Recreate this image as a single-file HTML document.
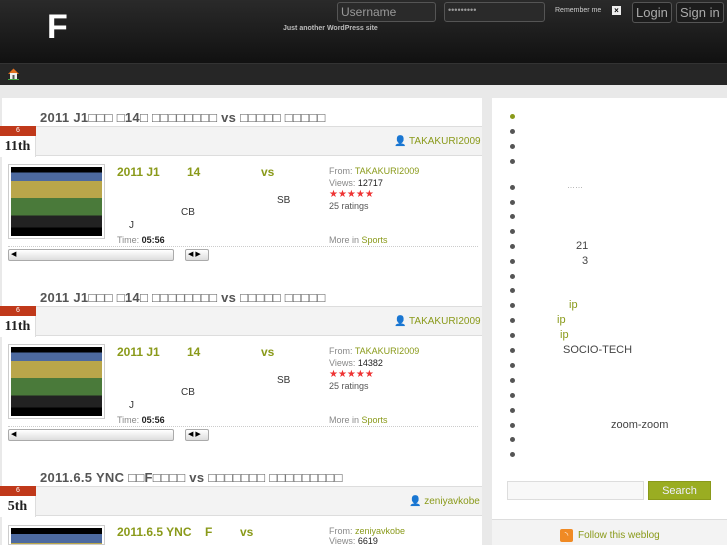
<!DOCTYPE html><html><head><meta charset="utf-8"><style>
*{margin:0;padding:0;box-sizing:border-box}
html,body{width:727px;height:545px;overflow:hidden}
body{background:#e9e9e9;font-family:"Liberation Sans",sans-serif;position:relative}
.a{position:absolute}
.hdr{left:0;top:0;width:727px;height:63px;background:linear-gradient(#2a2a2a,#111)}
.nav{left:0;top:63px;width:727px;height:22px;background:#262626;border-top:1px solid #333}
.inp{border:1px solid #555;border-radius:3px;background:#2a2a2a;color:#999;font-size:12px;padding:2px 3px;height:20px}
.btn{border:1px solid #555;border-radius:3px;color:#aaa;font-size:13px;height:21px;padding:2px 3px;background:#1c1c1c}
.main{left:2px;top:98px;width:480px;height:447px;background:#fff}
.side{left:492px;top:98px;width:235px;height:447px;background:#fff}
.ttl{font-size:13px;font-weight:bold;color:#555;letter-spacing:.3px;white-space:nowrap}
.meta{left:2px;width:480px;height:30px;background:#f3f3f3;border-top:1px solid #ddd;border-bottom:1px solid #ddd}
.dt{left:0;width:36px}
.dt .r{height:10px;background:#c0391a;color:#fff;font-size:7px;text-align:center;line-height:10px}
.dt .d{height:21px;background:#fff;font-family:"Liberation Serif",serif;font-weight:bold;font-size:14px;text-align:center;line-height:21px;color:#222;border-right:1px solid #ddd}
.auth{font-size:10px;color:#8a9a1a}
.th{width:97px;height:75px;border:1px solid #ccc;background:#fff;padding:2px}
.th div{width:100%;height:100%;background:linear-gradient(#000 0 8%,#4d6aa0 8% 20%,#b9a64a 20% 45%,#4a7a3a 45% 70%,#222 70% 88%,#000 88%)}
.vt{font-size:12px;font-weight:bold;color:#8a9a1a}
.g{font-size:10px;color:#333}
.s{font-size:9px;color:#888}
.s b{color:#222;font-weight:normal}
.s a{color:#8a9a1a}
.sb{height:12px;border:1px solid #aaa;border-radius:2px;background:linear-gradient(#fff,#ddd);font-size:7px;line-height:10px;color:#000;padding-left:2px}
.sep{left:8px;width:470px;border-top:1px dotted #ccc}
.li{left:510px;width:5px;height:5px;border-radius:50%;background:#555}
.lt{font-size:11px;color:#444}
</style></head><body>
<div class="a hdr"></div>
<div class="a" style="left:47px;top:8px;font-size:34px;color:#fff;font-weight:bold">F</div>
<div class="a" style="left:283px;top:25px;font-size:7px;color:#bbb;font-weight:bold">Just another WordPress site</div>
<div class="a inp" style="left:337px;top:2px;width:99px">Username</div>
<div class="a inp" style="left:444px;top:2px;width:101px;font-size:9px">•••••••••</div>
<div class="a" style="left:555px;top:7px;font-size:7px;color:#ccc">Remember me</div>
<div class="a" style="left:612px;top:6px;width:9px;height:9px;background:#eee;font-size:8px;line-height:9px;text-align:center;font-weight:bold">×</div>
<div class="a btn" style="left:632px;top:2px">Login</div>
<div class="a btn" style="left:676px;top:2px">Sign in</div>
<div class="a nav"></div>
<svg class="a" style="left:7px;top:67px" width="13" height="13" viewBox="0 0 13 13"><path d="M1 7 L6.5 1.5 L12 7 Z" fill="#e07020"/><rect x="3" y="6" width="7" height="6" fill="#eee"/><rect x="5.5" y="8" width="2" height="4" fill="#555"/><rect x="1" y="12" width="11" height="1" fill="#4a4"/></svg>
<div class="a main"></div><div class="a side"></div>

<div class="a ttl" style="left:40px;top:110px">2011 J1□□□ □14□ □□□□□□□□ vs □□□□□ □□□□□</div>
<div class="a meta" style="top:126px"></div>
<div class="a dt" style="top:126px"><div class="r">6</div><div class="d">11th</div></div>
<div class="a auth" style="left:394px;top:136px">👤 TAKAKURI2009</div>
<div class="a th" style="left:8px;top:164px"><div></div></div>
<div class="a vt" style="left:117px;top:165px">2011 J1</div><div class="a vt" style="left:187px;top:165px">14</div><div class="a vt" style="left:261px;top:165px">vs</div>
<div class="a g" style="left:277px;top:195px">SB</div><div class="a g" style="left:181px;top:207px">CB</div><div class="a g" style="left:129px;top:220px">J</div>
<div class="a s" style="left:117px;top:235px">Time: <b style="font-weight:bold">05:56</b></div>
<div class="a s" style="left:329px;top:166px">From: <a>TAKAKURI2009</a></div>
<div class="a s" style="left:329px;top:178px">Views: <b>12717</b></div>
<div class="a" style="left:329px;top:189px;color:#e33;font-size:10px">★★★★★</div>
<div class="a s" style="left:329px;top:201px;color:#555">25 ratings</div>
<div class="a s" style="left:329px;top:235px">More in <a>Sports</a></div>
<div class="a sep" style="top:246px"></div>
<div class="a sb" style="left:8px;top:249px;width:166px">◀</div>
<div class="a sb" style="left:185px;top:249px;width:24px">◀ ▶</div>

<div class="a ttl" style="left:40px;top:290px">2011 J1□□□ □14□ □□□□□□□□ vs □□□□□ □□□□□</div>
<div class="a meta" style="top:306px"></div>
<div class="a dt" style="top:306px"><div class="r">6</div><div class="d">11th</div></div>
<div class="a auth" style="left:394px;top:316px">👤 TAKAKURI2009</div>
<div class="a th" style="left:8px;top:344px"><div></div></div>
<div class="a vt" style="left:117px;top:345px">2011 J1</div><div class="a vt" style="left:187px;top:345px">14</div><div class="a vt" style="left:261px;top:345px">vs</div>
<div class="a g" style="left:277px;top:375px">SB</div><div class="a g" style="left:181px;top:387px">CB</div><div class="a g" style="left:129px;top:400px">J</div>
<div class="a s" style="left:117px;top:415px">Time: <b style="font-weight:bold">05:56</b></div>
<div class="a s" style="left:329px;top:346px">From: <a>TAKAKURI2009</a></div>
<div class="a s" style="left:329px;top:358px">Views: <b>14382</b></div>
<div class="a" style="left:329px;top:369px;color:#e33;font-size:10px">★★★★★</div>
<div class="a s" style="left:329px;top:381px;color:#555">25 ratings</div>
<div class="a s" style="left:329px;top:415px">More in <a>Sports</a></div>
<div class="a sep" style="top:426px"></div>
<div class="a sb" style="left:8px;top:429px;width:166px">◀</div>
<div class="a sb" style="left:185px;top:429px;width:24px">◀ ▶</div>

<div class="a ttl" style="left:40px;top:470px">2011.6.5 YNC □□F□□□□ vs □□□□□□□ □□□□□□□□□</div>
<div class="a meta" style="top:486px"></div>
<div class="a dt" style="top:486px"><div class="r">6</div><div class="d">5th</div></div>
<div class="a auth" style="left:409px;top:496px">👤 zeniyavkobe</div>
<div class="a th" style="left:8px;top:525px;height:20px;overflow:hidden"><div style="height:75px"></div></div>
<div class="a vt" style="left:117px;top:525px">2011.6.5 YNC</div><div class="a vt" style="left:205px;top:525px">F</div><div class="a vt" style="left:240px;top:525px">vs</div>
<div class="a s" style="left:329px;top:526px">From: <a>zeniyavkobe</a></div>
<div class="a s" style="left:329px;top:536px">Views: <b>6619</b></div>

<div class="a li" style="top:114px;background:#8a9a1a"></div>
<div class="a li" style="top:129px"></div><div class="a li" style="top:144px"></div><div class="a li" style="top:159px"></div>
<div class="a li" style="top:185px"></div><div class="a li" style="top:200px"></div><div class="a li" style="top:214px"></div><div class="a li" style="top:229px"></div><div class="a li" style="top:244px"></div><div class="a li" style="top:259px"></div><div class="a li" style="top:274px"></div><div class="a li" style="top:288px"></div><div class="a li" style="top:303px"></div><div class="a li" style="top:318px"></div><div class="a li" style="top:333px"></div><div class="a li" style="top:348px"></div><div class="a li" style="top:363px"></div><div class="a li" style="top:378px"></div><div class="a li" style="top:393px"></div><div class="a li" style="top:408px"></div><div class="a li" style="top:423px"></div><div class="a li" style="top:437px"></div><div class="a li" style="top:452px"></div>
<div class="a lt" style="left:567px;top:181px;font-size:8px;color:#999">……</div>
<div class="a lt" style="left:576px;top:240px">21</div>
<div class="a lt" style="left:582px;top:255px">3</div>
<div class="a lt" style="left:569px;top:299px;color:#8a9a1a">ip</div>
<div class="a lt" style="left:557px;top:314px;color:#8a9a1a">ip</div>
<div class="a lt" style="left:560px;top:329px;color:#8a9a1a">ip</div>
<div class="a lt" style="left:563px;top:344px">SOCIO-TECH</div>
<div class="a lt" style="left:611px;top:419px">zoom-zoom</div>
<div class="a" style="left:507px;top:481px;width:137px;height:19px;border:1px solid #ddd;background:#f8f8f8"></div>
<div class="a" style="left:648px;top:481px;width:63px;height:19px;background:#9aad22;color:#eef;font-size:11px;text-align:center;line-height:19px;border:1px solid #8a9a1a">Search</div>
<div class="a" style="left:492px;top:519px;width:235px;height:26px;background:#f3f3f3;border-top:1px solid #ddd"></div>
<div class="a" style="left:560px;top:529px;width:13px;height:13px;background:#f08a24;border-radius:2px;color:#fff;font-size:9px;line-height:13px;text-align:center">◝</div>
<div class="a" style="left:578px;top:530px;font-size:10px;color:#8a9a1a">Follow this weblog</div>
</body></html>
